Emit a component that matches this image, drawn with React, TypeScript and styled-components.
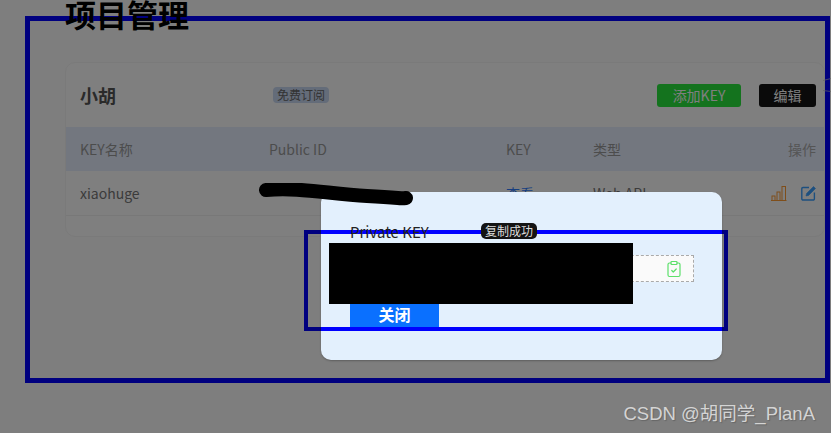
import { ClipboardCheck } from "lucide-react";
import styled, { createGlobalStyle } from "styled-components";

const GlobalStyle = createGlobalStyle`
    html, body {
        margin: 0;
        padding: 0;
        background: #808080;
    }
    * {
        box-sizing: border-box;
    }
`;

const FONT = `"Noto Sans CJK SC", "Noto Sans", sans-serif`;

export default function App() {
    return (
        <Page>
            <GlobalStyle />
            <Title>项目管理</Title>
            <Card>
                <CardHeader>
                    <ProjectName>小胡</ProjectName>
                    <PlanTag>免费订阅</PlanTag>
                    <Actions>
                        <ActionButton $variant="add">添加KEY</ActionButton>
                        <ActionButton $variant="edit">编辑</ActionButton>
                    </Actions>
                </CardHeader>
                <TableHead>
                    <span>KEY名称</span>
                    <span>Public ID</span>
                    <span>KEY</span>
                    <span>类型</span>
                    <RightCell>操作</RightCell>
                </TableHead>
                <TableRow>
                    <span>xiaohuge</span>
                    <span></span>
                    <LinkText>查看</LinkText>
                    <span>Web API</span>
                    <RowIcons>
                        <svg width="16" height="15" viewBox="0 0 16 15" fill="none" stroke="#ff9c34" strokeWidth="1">
                            <path d="M0 14.5h15.5" />
                            <rect x="1" y="10" width="3" height="4.5" />
                            <rect x="6" y="6" width="3" height="8.5" />
                            <rect x="11" y="0.5" width="3.5" height="14" />
                        </svg>
                        <svg width="15" height="16" viewBox="0 0 15 16" fill="none" stroke="#3a9fff">
                            <path d="M8 2.5H2a1.2 1.2 0 0 0-1.2 1.2v10.1A1.2 1.2 0 0 0 2 15h10.2a1.2 1.2 0 0 0 1.2-1.2V7.5" strokeWidth="1.4" />
                            <path d="M5 11l.6-2.6L12.5 1.5l2 2-6.9 6.9z" fill="#3a9fff" strokeWidth="0.6" />
                        </svg>
                    </RowIcons>
                </TableRow>
            </Card>

            <OuterFrame />
            <InnerFrame />
            <EdgeMark width="8" height="14" viewBox="0 0 8 14" fill="none" stroke="#c8c8c8" strokeWidth="0.7">
                <path d="M0 2.5L8 0.5M0 12.5L8 13.5" />
            </EdgeMark>

            <Mask />

            <Modal>
                <ModalFrame />
                <KeyHeading>
                    <KeyLabel>Private KEY</KeyLabel>
                    <CopiedTag>复制成功</CopiedTag>
                </KeyHeading>
                <KeyField>
                    <ClipboardCheck size={18} color="#5ce06a" strokeWidth={1.6} />
                </KeyField>
                <CloseButton>关闭</CloseButton>
                <Redaction />
            </Modal>

            <Scribble width="170" height="30" viewBox="0 0 170 30" fill="none">
                <path
                    d="M7 7C40 4 70 11 108 13S140 16 147 15"
                    stroke="#000"
                    strokeWidth="14"
                    strokeLinecap="round"
                />
            </Scribble>

            <Watermark>CSDN @胡同学_PlanA</Watermark>
        </Page>
    );
}

const Page = styled.div`
    position: relative;
    width: 831px;
    height: 433px;
    overflow: hidden;
    padding-left: 65px;
    background: #fdfdfd;
    font-family: ${FONT};
    font-size: 14px;
    color: #333;
`;

const Title = styled.h1`
    position: relative;
    z-index: 2;
    margin: 0;
    height: 62px;
    font-size: 31px;
    line-height: 28px;
    font-weight: 700;
    color: #000;
`;

const Card = styled.div`
    width: 760px;
    padding-bottom: 20px;
    background: #fff;
    border: 1px solid #f4f4f4;
    border-radius: 10px;
`;

const CardHeader = styled.div`
    display: flex;
    align-items: center;
    height: 64px;
    padding: 0 8px 0 14px;
`;

const ProjectName = styled.div`
    width: 193px;
    font-size: 18px;
    font-weight: 700;
    color: #555;
`;

const PlanTag = styled.span`
    padding: 0 4px;
    height: 16px;
    line-height: 16px;
    font-size: 12px;
    color: #666;
    background: #c8d8f2;
    border-radius: 4px;
`;

const Actions = styled.div`
    display: flex;
    gap: 18px;
    margin-left: auto;
`;

const ActionButton = styled.div<{ $variant: "add" | "edit" }>`
    display: flex;
    align-items: center;
    justify-content: center;
    height: 23px;
    width: ${(p) => (p.$variant === "add" ? "84px" : "57px")};
    border-radius: 3px;
    color: #fff;
    background: ${(p) => (p.$variant === "add" ? "#28e63c" : "#141414")};
`;

const Columns = styled.div`
    display: grid;
    grid-template-columns: 189px 237px 87px 1fr auto;
    align-items: center;
    padding: 0 8px 0 14px;
`;

const TableHead = styled(Columns)`
    height: 44px;
    background: #e6eeff;
    color: #999;
`;

const TableRow = styled(Columns)`
    height: 45px;
    border-bottom: 1px solid #f0f0f0;
    color: #777;
`;

const RightCell = styled.span`
    text-align: right;
    color: #aaa;
`;

const LinkText = styled.span`
    color: #2f7dff;
`;

const RowIcons = styled.div`
    display: flex;
    align-items: center;
    gap: 14px;
`;

const OuterFrame = styled.div`
    position: absolute;
    z-index: 1;
    left: 25px;
    top: 16px;
    width: 805px;
    height: 367px;
    border: 5px solid #00f;
`;

const InnerFrame = styled.div`
    position: absolute;
    z-index: 1;
    left: 304px;
    top: 230px;
    width: 424px;
    height: 101px;
    border: 4px solid #00f;
`;

const EdgeMark = styled.svg`
    position: absolute;
    z-index: 1;
    left: 823px;
    top: 78px;
`;

const Mask = styled.div`
    position: absolute;
    z-index: 3;
    inset: 0;
    background: rgba(0, 0, 0, 0.5);
`;

const Modal = styled.div`
    position: absolute;
    z-index: 4;
    left: 321px;
    top: 192px;
    width: 401px;
    height: 168px;
    overflow: hidden;
    padding: 29px 29px 0;
    background: #e3f0fd;
    border-radius: 10px;
    box-shadow: 0 1px 2px rgba(0, 0, 0, 0.25);
`;

/* same box as InnerFrame, seen above the mask inside the modal only */
const ModalFrame = styled(InnerFrame)`
    left: -17px;
    top: 38px;
`;

const KeyHeading = styled.div`
    position: relative;
    z-index: 2;
    display: flex;
    align-items: center;
    height: 20px;
`;

const KeyLabel = styled.span`
    width: 131px;
    font-size: 15px;
    color: #222;
`;

const CopiedTag = styled.span`
    height: 16px;
    padding: 0 4px;
    line-height: 16px;
    font-size: 12px;
    color: #ddd;
    background: #141414;
    border-radius: 5px;
`;

const KeyField = styled.div`
    position: relative;
    display: flex;
    align-items: center;
    justify-content: flex-end;
    width: 344px;
    height: 27px;
    margin-top: 14px;
    padding-right: 10px;
    background: #fafafa;
    border: 1px dashed #aaa;
`;

const CloseButton = styled.div`
    position: relative;
    width: 89px;
    height: 24px;
    margin-top: 21px;
    line-height: 22px;
    text-align: center;
    font-size: 16px;
    font-weight: 700;
    color: #fff;
    background: #0a70ff;
`;

const Redaction = styled.div`
    position: absolute;
    z-index: 3;
    left: 8px;
    top: 51px;
    width: 304px;
    height: 61px;
    background: #000;
`;

const Scribble = styled.svg`
    position: absolute;
    z-index: 5;
    left: 259px;
    top: 183px;
`;

const Watermark = styled.div`
    position: absolute;
    z-index: 5;
    right: 16px;
    top: 402px;
    font-family: "Liberation Sans", "Noto Sans CJK SC", sans-serif;
    font-size: 18.5px;
    line-height: 24px;
    color: #d4d4d4;
    text-shadow: 1px 1px 1px #666;
`;
